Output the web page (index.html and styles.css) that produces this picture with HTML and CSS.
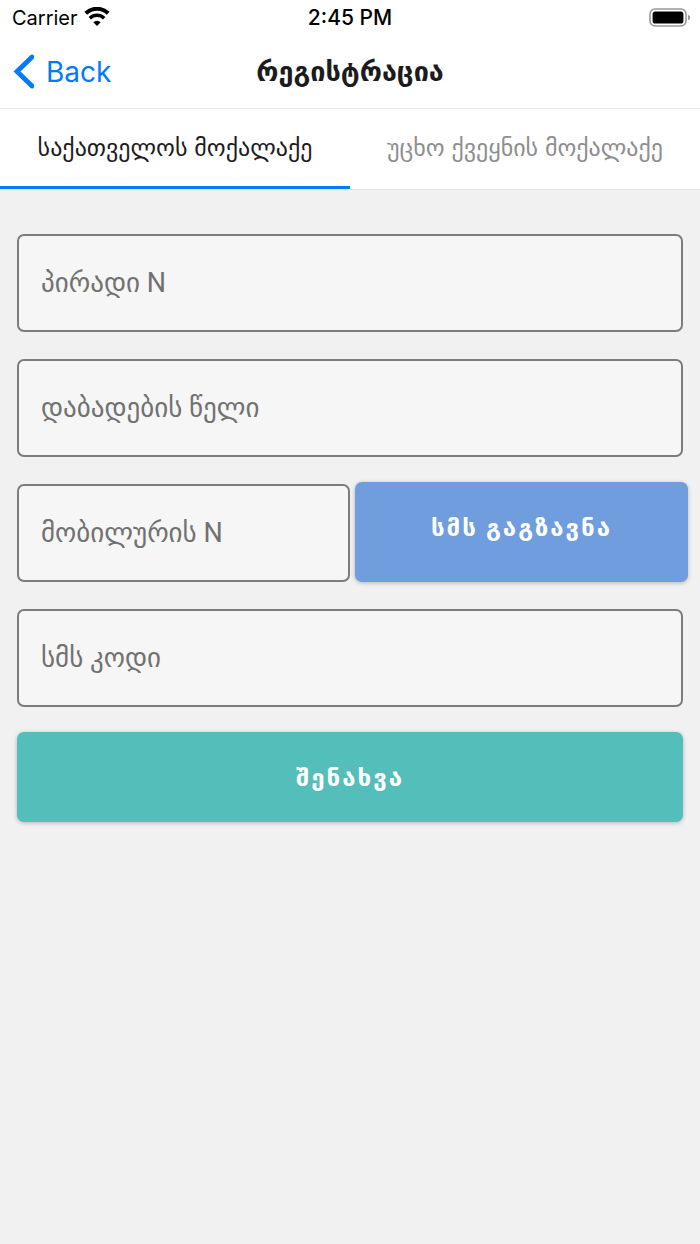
FILE: index.html
```html
<!DOCTYPE html>
<html lang="ka">
<head>
    <meta charset="UTF-8">
    <meta name="viewport" content="width=device-width, initial-scale=1.0">
    <title>რეგისტრაცია</title>
    <link rel="stylesheet" href="styles.css">
</head>
<body>
    <div class="status-bar">
        <div class="carrier">
            <span>Carrier</span>
            <svg class="wifi" viewBox="0 0 26 19" width="26" height="19" aria-hidden="true">
                <path d="M1.8 6.3a16 16 0 0 1 22.4 0" fill="none" stroke="#000" stroke-width="4"/>
                <path d="M5.8 11.2a10.3 10.3 0 0 1 14.4 0" fill="none" stroke="#000" stroke-width="3.4"/>
                <path d="M13 19l-3.7-3.7a5.2 5.2 0 0 1 7.4 0z"/>
            </svg>
        </div>
        <span class="time">2:45 PM</span>
        <svg class="battery" viewBox="0 0 42 20" width="42" height="20" aria-hidden="true">
            <rect x="1" y="1" width="36" height="17" rx="5" fill="none" stroke="#999" stroke-width="1.6"/>
            <rect x="3.6" y="3.4" width="30.8" height="12.2" rx="2.6"/>
            <path d="M39 6.7c1.4.5 2.1 1.6 2.1 2.8s-.7 2.3-2.1 2.8z" fill="#999"/>
        </svg>
    </div>

    <header class="nav-bar">
        <a href="#" class="back">
            <svg viewBox="0 0 22 36" width="22" height="36" aria-hidden="true">
                <path d="M20 3L5 17.5L20 32" fill="none" stroke="#007AFF" stroke-width="4.8" stroke-linecap="round"/>
            </svg>
            <span>Back</span>
        </a>
        <h1 class="title">რეგისტრაცია</h1>
    </header>

    <nav class="tabs">
        <button type="button" class="tab active">საქათველოს მოქალაქე</button>
        <button type="button" class="tab">უცხო ქვეყნის მოქალაქე</button>
    </nav>

    <form class="form">
        <input class="field" type="text" placeholder="პირადი N" aria-label="პირადი N">
        <input class="field" type="text" placeholder="დაბადების წელი" aria-label="დაბადების წელი">
        <div class="phone-row">
            <input class="field" type="tel" placeholder="მობილურის N" aria-label="მობილურის N">
            <button type="button" class="btn btn-sms">სმს გაგზავნა</button>
        </div>
        <input class="field" type="text" placeholder="სმს კოდი" aria-label="სმს კოდი">
        <button type="submit" class="btn btn-save">შენახვა</button>
    </form>
</body>
</html>
```
FILE: styles.css
```css
* {
    box-sizing: border-box;
}

body {
    margin: 0;
    min-height: 100vh;
    background-color: #f1f1f1;
    color: #1c1c1e;
    font-family: Inter, "DejaVu Sans", sans-serif;
}

.status-bar {
    display: grid;
    grid-template-columns: 1fr auto 1fr;
    align-items: center;
    height: 35px;
    padding: 0 9px;
    background-color: #fff;
    color: #000;
    font-size: 20px;
}

.carrier {
    display: flex;
    align-items: center;
    gap: 6px;
    padding-left: 3px;
}

.wifi {
    margin-bottom: 2px;
}

.time {
    font-size: 21px;
    font-weight: 500;
}

.battery {
    justify-self: end;
}

.nav-bar {
    display: grid;
    grid-template-columns: 1fr auto 1fr;
    align-items: center;
    height: 74px;
    padding: 0 12px;
    background-color: #fff;
    border-bottom: 1px solid #e8e8e8;
}

.back {
    display: flex;
    align-items: center;
    gap: 12px;
    color: #007AFF;
    font-size: 28px;
    text-decoration: none;
}

.title {
    margin: 0;
    font-size: 27px;
    font-weight: 600;
}

.tabs {
    display: flex;
    background-color: #fff;
    border-bottom: 1px solid #e0e0e0;
}

.tab {
    flex: 1;
    height: 80px;
    padding: 0;
    border: 0;
    border-bottom: 3px solid transparent;
    background: none;
    color: #8e8e8f;
    font-family: inherit;
    font-size: 24px;
    text-transform: uppercase;
}

.tab.active {
    border-bottom-color: #007AFF;
    color: #1c1c1e;
}

.form {
    display: flex;
    flex-direction: column;
    gap: 27px;
    padding: 44px 17px;
}

.field {
    width: 100%;
    height: 98px;
    padding: 0 22px;
    border: 2px solid #7c7c7c;
    border-radius: 7px;
    background-color: #f6f6f6;
    color: #1c1c1e;
    font-family: Roboto, "DejaVu Sans", sans-serif;
    font-size: 27px;
}

.field::placeholder {
    color: #717171;
    opacity: 1;
}

.phone-row {
    display: grid;
    grid-template-columns: 1fr 1fr;
    gap: 5px;
    margin-right: -5px;
}

.btn {
    height: 90px;
    margin-top: -2px;
    border: 0;
    border-radius: 7px;
    box-shadow: 0 1px 4px rgba(0, 0, 0, 0.25);
    color: #fff;
    font-family: inherit;
    font-size: 24px;
    font-weight: 600;
    letter-spacing: 2px;
    text-transform: uppercase;
}

.btn-sms {
    height: 100px;
    padding-bottom: 10px;
    background-color: #709ddd;
}

.btn-save {
    background-color: #54beba;
}
```
